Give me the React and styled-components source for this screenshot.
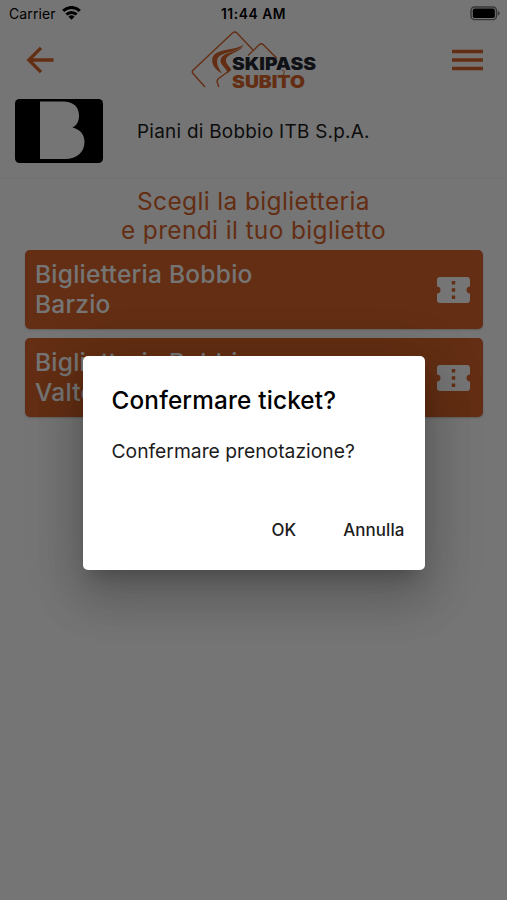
import React from 'react';
import styled, { createGlobalStyle } from 'styled-components';

const GlobalStyle = createGlobalStyle`
    * {
        box-sizing: border-box;
    }
    body {
        margin: 0;
        font-family: Inter, "Liberation Sans", sans-serif;
    }
`;

const Screen = styled.div`
    position: relative;
    width: 507px;
    height: 900px;
    background: #fff;
    overflow: hidden;
`;

const StatusBar = styled.div`
    display: grid;
    grid-template-columns: 1fr auto 1fr;
    align-items: center;
    height: 27px;
    padding: 0 6px 0 9px;
    font-size: 14px;
    color: #000;
`;

const Carrier = styled.div`
    display: flex;
    align-items: center;
    gap: 6px;
    letter-spacing: 0.1px;
`;

const Clock = styled.div`
    margin-right: 3px;
    font-size: 13.8px;
    font-weight: 600;
    letter-spacing: 0.55px;
`;

const Battery = styled.div`
    display: flex;
    justify-content: flex-end;
`;

const Header = styled.header`
    display: flex;
    align-items: center;
    justify-content: space-between;
    height: 66px;
    padding: 0 24px 0 26px;
`;

const IconButton = styled.button`
    display: flex;
    padding: 0;
    border: 0;
    background: none;
`;

const Company = styled.div`
    display: flex;
    align-items: center;
    gap: 34px;
    height: 86px;
    padding: 6px 15px 15px;
    border-bottom: 1px solid #f6f6f6;
    font-size: 18.9px;
    letter-spacing: 0.27px;
    color: #1c1c1c;
`;

const Heading = styled.h1`
    margin: 0;
    padding: 8px 0 4px;
    text-align: center;
    font-size: 24.5px;
    line-height: 29.4px;
    font-weight: 400;
    letter-spacing: 0.35px;
    color: #d8642a;
`;

const TicketList = styled.div`
    display: flex;
    flex-direction: column;
    gap: 9px;
    padding: 0 24px 0 25px;
`;

const TicketButton = styled.button`
    display: flex;
    align-items: center;
    justify-content: space-between;
    height: 79px;
    padding: 1px 13px 0 10px;
    border: 0;
    border-radius: 5px;
    background: #d8642a;
    box-shadow: 0 1px 2px rgba(0, 0, 0, 0.2);
    text-align: left;
    font-family: inherit;
    font-size: 24.5px;
    line-height: 29.4px;
    font-weight: 500;
    letter-spacing: 0.25px;
    color: #fff;
`;

const Scrim = styled.div`
    position: absolute;
    inset: 0;
    display: flex;
    align-items: flex-start;
    justify-content: center;
    padding-top: 356px;
    background: rgba(0, 0, 0, 0.54);
`;

const Dialog = styled.div`
    display: flex;
    flex-direction: column;
    width: 342px;
    height: 214px;
    padding: 29px 20px 20px 29px;
    border-radius: 5px;
    background: #fff;
    box-shadow: 0 13px 18px -8px rgba(0, 0, 0, 0.2), 0 29px 46px 4px rgba(0, 0, 0, 0.14), 0 11px 56px 10px rgba(0, 0, 0, 0.12);
`;

const DialogTitle = styled.h2`
    margin: 0;
    font-size: 24.3px;
    line-height: 30px;
    font-weight: 500;
    letter-spacing: 0.18px;
    color: #000;
`;

const DialogText = styled.p`
    margin: 24px 0 0;
    font-size: 19.3px;
    line-height: 24px;
    color: #1c1c1c;
`;

const DialogActions = styled.div`
    display: flex;
    justify-content: flex-end;
    gap: 47px;
    margin-top: auto;
`;

const DialogButton = styled.button`
    padding: 0;
    border: 0;
    background: none;
    font-family: inherit;
    font-size: 16.9px;
    line-height: 40px;
    font-weight: 500;
    letter-spacing: 0.1px;
    color: #1c1c1c;
`;

const WifiIcon = () => (
    <svg width="19" height="15" viewBox="0 0 19 15" fill="none" stroke="#000" strokeWidth="3">
        <path d="M1.2 4.9a11.7 11.7 0 0 1 16.6 0" />
        <path d="M4.4 8.500a7.2 7.2 0 0 1 10.2 0" />
        <path d="m9.5 13.700-3-2.900a4.3 4.3 0 0 1 6 0z" fill="#000" stroke="none" />
    </svg>
);

const BatteryIcon = () => (
    <svg width="31" height="15" viewBox="0 0 31 15">
        <rect x="1" y="1" width="25.5" height="12.6" rx="3.6" fill="none" stroke="#777" strokeWidth="1.4" />
        <rect x="2.8" y="2.6" width="22" height="9.4" rx="1.8" fill="#000" />
        <path d="M27.8 5v4.6c2.6-1 2.6-3.6 0-4.6z" fill="#777" />
    </svg>
);

const BackIcon = () => (
    <svg width="29" height="28" viewBox="0 0 29 28" fill="none" stroke="#d8642a" strokeWidth="3.3">
        <path d="M15 1.8 2.8 14 15 26.2M3 14h24.6" />
    </svg>
);

const MenuIcon = () => (
    <svg width="31" height="22" viewBox="0 0 31 22" fill="#d8642a">
        <path d="M0 .8h31v3.5H0zM0 9.3h31v3.5H0zM0 17.7h31v3.5H0z" />
    </svg>
);

const Logo = () => (
    <svg width="126" height="62" viewBox="0 0 126 62">
        <g fill="none" stroke="#d8642a" strokeWidth="1.4">
            <path d="M14 58 2 44.5q-1.5-1.700 0-3.300L41.5 4q2.300-2.200 4.500 0L62 21" />
            <path d="m57 26.5 11.5-11q1.800-1.600 3.600 0L86 29.5" />
            <path d="M27.8 58 26 52.5q0-1.500 1.600-3L40 40.500" />
            <path d="m91 41 2.500 1.500-1.500 4 2 2" strokeWidth="1" />
        </g>
        <path d="M53 14.8C45 23 22.500 18 21.200 30.500c-.4 5 3 10.500 9.800 14-3-5-5.500-8.500-4.700-13.500C28 21.500 47 25.500 53 14.800z" fill="#d8642a" />
        <path d="M53 16C48 24 30.500 22 29.500 31.500c-.4 5 6.500 7.500 7 13l3.400-4.500c-1.500-3-5-5-5-9C35.500 24.500 49 24 53 16z" fill="#d8642a" />
        <g fontFamily="Inter, sans-serif" fontSize="17.2" fontWeight="900">
            <text x="41" y="40.5" textLength="84" lengthAdjust="spacingAndGlyphs" fill="#222630">SKIPASS</text>
            <text x="41" y="58.5" textLength="73" lengthAdjust="spacingAndGlyphs" fill="#d8642a">SUBITO</text>
        </g>
    </svg>
);

const CompanyLogo = () => (
    <svg width="88" height="64" viewBox="0 0 88 64">
        <rect width="88" height="64" rx="4.5" fill="#000" />
        <path d="M25 2.500h23c10.5 0 16 5.500 16 14 0 6-2 9.500-6.500 12C66 30.500 69.500 36.500 69.500 43 69.500 53 62 60 50 60H25z" fill="#fff" />
    </svg>
);

const TicketIcon = () => (
    <svg width="33" height="28" viewBox="0 0 33 28">
        <path
            d="M3 1h27a3 3 0 0 1 3 3v6.5a3.5 3.5 0 0 0 0 7V24a3 3 0 0 1-3 3H3a3 3 0 0 1-3-3v-6.5a3.5 3.5 0 0 0 0-7V4a3 3 0 0 1 3-3z"
            fill="#fff"
        />
        <path d="M14.8 5h3.4v3.4h-3.4zM14.8 12.3h3.4v3.4h-3.4zM14.8 19.6h3.4V23h-3.4z" fill="#d8642a" />
    </svg>
);

const offices = [
    { name: 'Biglietteria Bobbio', place: 'Barzio' },
    { name: 'Biglietteria Bobbio', place: 'Valtorta' },
];

const App = () => {
    return (
        <Screen>
            <GlobalStyle />
            <StatusBar>
                <Carrier>Carrier <WifiIcon /></Carrier>
                <Clock>11:44 AM</Clock>
                <Battery><BatteryIcon /></Battery>
            </StatusBar>
            <Header>
                <IconButton><BackIcon /></IconButton>
                <Logo />
                <IconButton><MenuIcon /></IconButton>
            </Header>
            <Company>
                <CompanyLogo />
                <span>Piani di Bobbio ITB S.p.A.</span>
            </Company>
            <Heading>Scegli la biglietteria<br />e prendi il tuo biglietto</Heading>
            <TicketList>
                {offices.map(office => (
                    <TicketButton key={office.place}>
                        <span>{office.name}<br />{office.place}</span>
                        <TicketIcon />
                    </TicketButton>
                ))}
            </TicketList>
            <Scrim>
                <Dialog>
                    <DialogTitle>Confermare ticket?</DialogTitle>
                    <DialogText>Confermare prenotazione?</DialogText>
                    <DialogActions>
                        <DialogButton>OK</DialogButton>
                        <DialogButton>Annulla</DialogButton>
                    </DialogActions>
                </Dialog>
            </Scrim>
        </Screen>
    );
}

export default App;
